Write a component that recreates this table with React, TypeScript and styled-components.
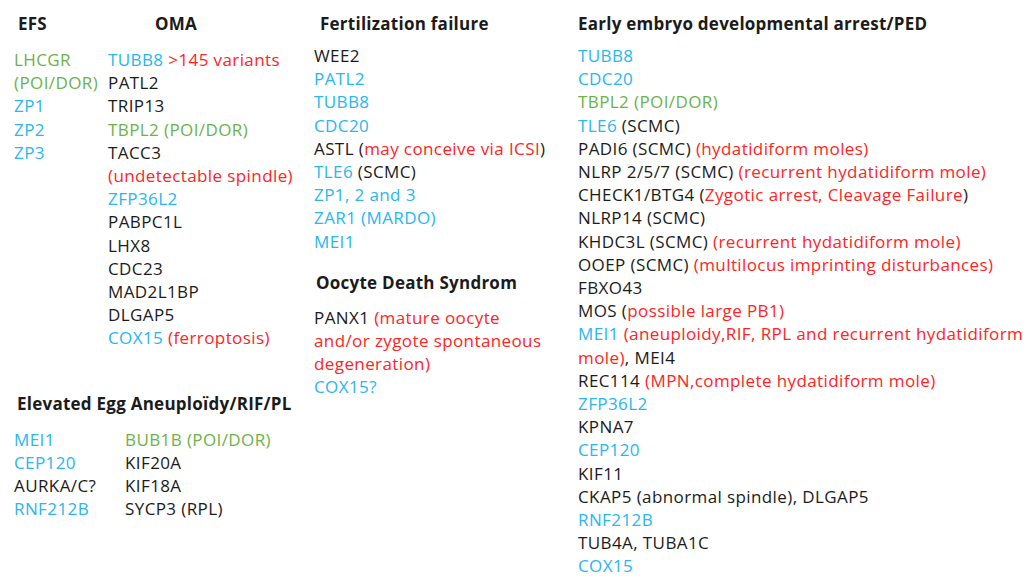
import styled, { createGlobalStyle } from 'styled-components';

const GlobalStyle = createGlobalStyle`
  html, body {
    margin: 0;
    padding: 0;
    background: #ffffff;
  }
  body {
    font-family: 'Open Sans', 'Liberation Sans', sans-serif;
  }
`;

type Tone = 'blue' | 'green' | 'red' | 'black';

const tones: Record<Tone, string> = {
  blue: '#29b6f2',
  green: '#6cb24a',
  red: '#ff2424',
  black: '#1b1b1b',
};

const Page = styled.div`
  width: 1024px;
  height: 578px;
  display: flex;
  overflow: hidden;
  font-size: 17px;
  letter-spacing: 0.4px;
  color: ${tones.black};
`;

const LeftArea = styled.div`
  width: 300px;
  padding-left: 14px;
  display: flex;
  flex-direction: column;
`;

const MidArea = styled.div`
  width: 264px;
  display: flex;
  flex-direction: column;
`;

const RightArea = styled.div`
  flex: 1;
  display: flex;
  flex-direction: column;
`;

const Heading = styled.div<{ $indent?: number; $top?: number }>`
  font-weight: 700;
  font-size: 17px;
  letter-spacing: 0.25px;
  line-height: 22px;
  margin-top: ${p => p.$top ?? 13}px;
  padding-left: ${p => p.$indent ?? 0}px;
  white-space: nowrap;
`;

const List = styled.div<{ $top?: number }>`
  display: flex;
  flex-direction: column;
  margin-top: ${p => p.$top ?? 9}px;
`;

const Line = styled.div`
  line-height: 23.2px;
  white-space: nowrap;
`;

const T = styled.span<{ $tone: Tone }>`
  color: ${p => tones[p.$tone]};
`;

const SplitRow = styled.div`
  display: flex;
`;

const SubCol = styled.div<{ $w?: number }>`
  display: flex;
  flex-direction: column;
  width: ${p => (p.$w ? `${p.$w}px` : 'auto')};
`;

export default function App() {
  return (
    <>
      <GlobalStyle />
      <Page>
        <LeftArea>
          <SplitRow>
            <SubCol $w={94}>
              <Heading $indent={4}>EFS</Heading>
              <List $top={13}>
                <Line><T $tone="green">LHCGR</T></Line>
                <Line><T $tone="green">(POI/DOR)</T></Line>
                <Line><T $tone="blue">ZP1</T></Line>
                <Line><T $tone="blue">ZP2</T></Line>
                <Line><T $tone="blue">ZP3</T></Line>
              </List>
            </SubCol>
            <SubCol>
              <Heading $indent={47}>OMA</Heading>
              <List $top={13}>
                <Line><T $tone="blue">TUBB8</T> <T $tone="red">&gt;145 variants</T></Line>
                <Line>PATL2</Line>
                <Line>TRIP13</Line>
                <Line><T $tone="green">TBPL2 (POI/DOR)</T></Line>
                <Line>TACC3</Line>
                <Line><T $tone="red">(undetectable spindle)</T></Line>
                <Line><T $tone="blue">ZFP36L2</T></Line>
                <Line>PABPC1L</Line>
                <Line>LHX8</Line>
                <Line>CDC23</Line>
                <Line>MAD2L1BP</Line>
                <Line>DLGAP5</Line>
                <Line><T $tone="blue">COX15</T> <T $tone="red">(ferroptosis)</T></Line>
              </List>
            </SubCol>
          </SplitRow>
          <Heading $indent={3} $top={43}>Elevated Egg Aneuploïdy/RIF/PL</Heading>
          <SplitRow>
            <SubCol $w={111}>
              <List $top={13}>
                <Line><T $tone="blue">MEI1</T></Line>
                <Line><T $tone="blue">CEP120</T></Line>
                <Line>AURKA/C?</Line>
                <Line><T $tone="blue">RNF212B</T></Line>
              </List>
            </SubCol>
            <SubCol>
              <List $top={13}>
                <Line><T $tone="green">BUB1B (POI/DOR)</T></Line>
                <Line>KIF20A</Line>
                <Line>KIF18A</Line>
                <Line>SYCP3 (RPL)</Line>
              </List>
            </SubCol>
          </SplitRow>
        </LeftArea>

        <MidArea>
          <Heading $indent={6}>Fertilization failure</Heading>
          <List $top={9}>
            <Line>WEE2</Line>
            <Line><T $tone="blue">PATL2</T></Line>
            <Line><T $tone="blue">TUBB8</T></Line>
            <Line><T $tone="blue">CDC20</T></Line>
            <Line>ASTL (<T $tone="red">may conceive via ICSI</T>)</Line>
            <Line><T $tone="blue">TLE6</T> (SCMC)</Line>
            <Line><T $tone="blue">ZP1, 2 and 3</T></Line>
            <Line><T $tone="blue">ZAR1 (MARDO)</T></Line>
            <Line><T $tone="blue">MEI1</T></Line>
          </List>
          <Heading $indent={2} $top={19}>Oocyte Death Syndrom</Heading>
          <List $top={12}>
            <Line>PANX1 <T $tone="red">(mature oocyte</T></Line>
            <Line><T $tone="red">and/or zygote spontaneous</T></Line>
            <Line><T $tone="red">degeneration)</T></Line>
            <Line><T $tone="blue">COX15?</T></Line>
          </List>
        </MidArea>

        <RightArea>
          <Heading>Early embryo developmental arrest/PED</Heading>
          <List $top={9}>
            <Line><T $tone="blue">TUBB8</T></Line>
            <Line><T $tone="blue">CDC20</T></Line>
            <Line><T $tone="green">TBPL2 (POI/DOR)</T></Line>
            <Line><T $tone="blue">TLE6</T> (SCMC)</Line>
            <Line>PADI6 (SCMC) <T $tone="red">(hydatidiform moles)</T></Line>
            <Line>NLRP 2/5/7 (SCMC) <T $tone="red">(recurrent hydatidiform mole)</T></Line>
            <Line>CHECK1/BTG4 (<T $tone="red">Zygotic arrest, Cleavage Failure</T>)</Line>
            <Line>NLRP14 (SCMC)</Line>
            <Line>KHDC3L (SCMC) <T $tone="red">(recurrent hydatidiform mole)</T></Line>
            <Line>OOEP (SCMC) <T $tone="red">(multilocus imprinting disturbances)</T></Line>
            <Line>FBXO43</Line>
            <Line>MOS (<T $tone="red">possible large PB1)</T></Line>
            <Line><T $tone="blue">MEI1</T> <T $tone="red">(aneuploidy,RIF, RPL and recurrent hydatidiform</T></Line>
            <Line><T $tone="red">mole)</T>, MEI4</Line>
            <Line>REC114 <T $tone="red">(MPN,complete hydatidiform mole)</T></Line>
            <Line><T $tone="blue">ZFP36L2</T></Line>
            <Line>KPNA7</Line>
            <Line><T $tone="blue">CEP120</T></Line>
            <Line>KIF11</Line>
            <Line>CKAP5 (abnormal spindle), DLGAP5</Line>
            <Line><T $tone="blue">RNF212B</T></Line>
            <Line>TUB4A, TUBA1C</Line>
            <Line><T $tone="blue">COX15</T></Line>
          </List>
        </RightArea>
      </Page>
    </>
  );
}
